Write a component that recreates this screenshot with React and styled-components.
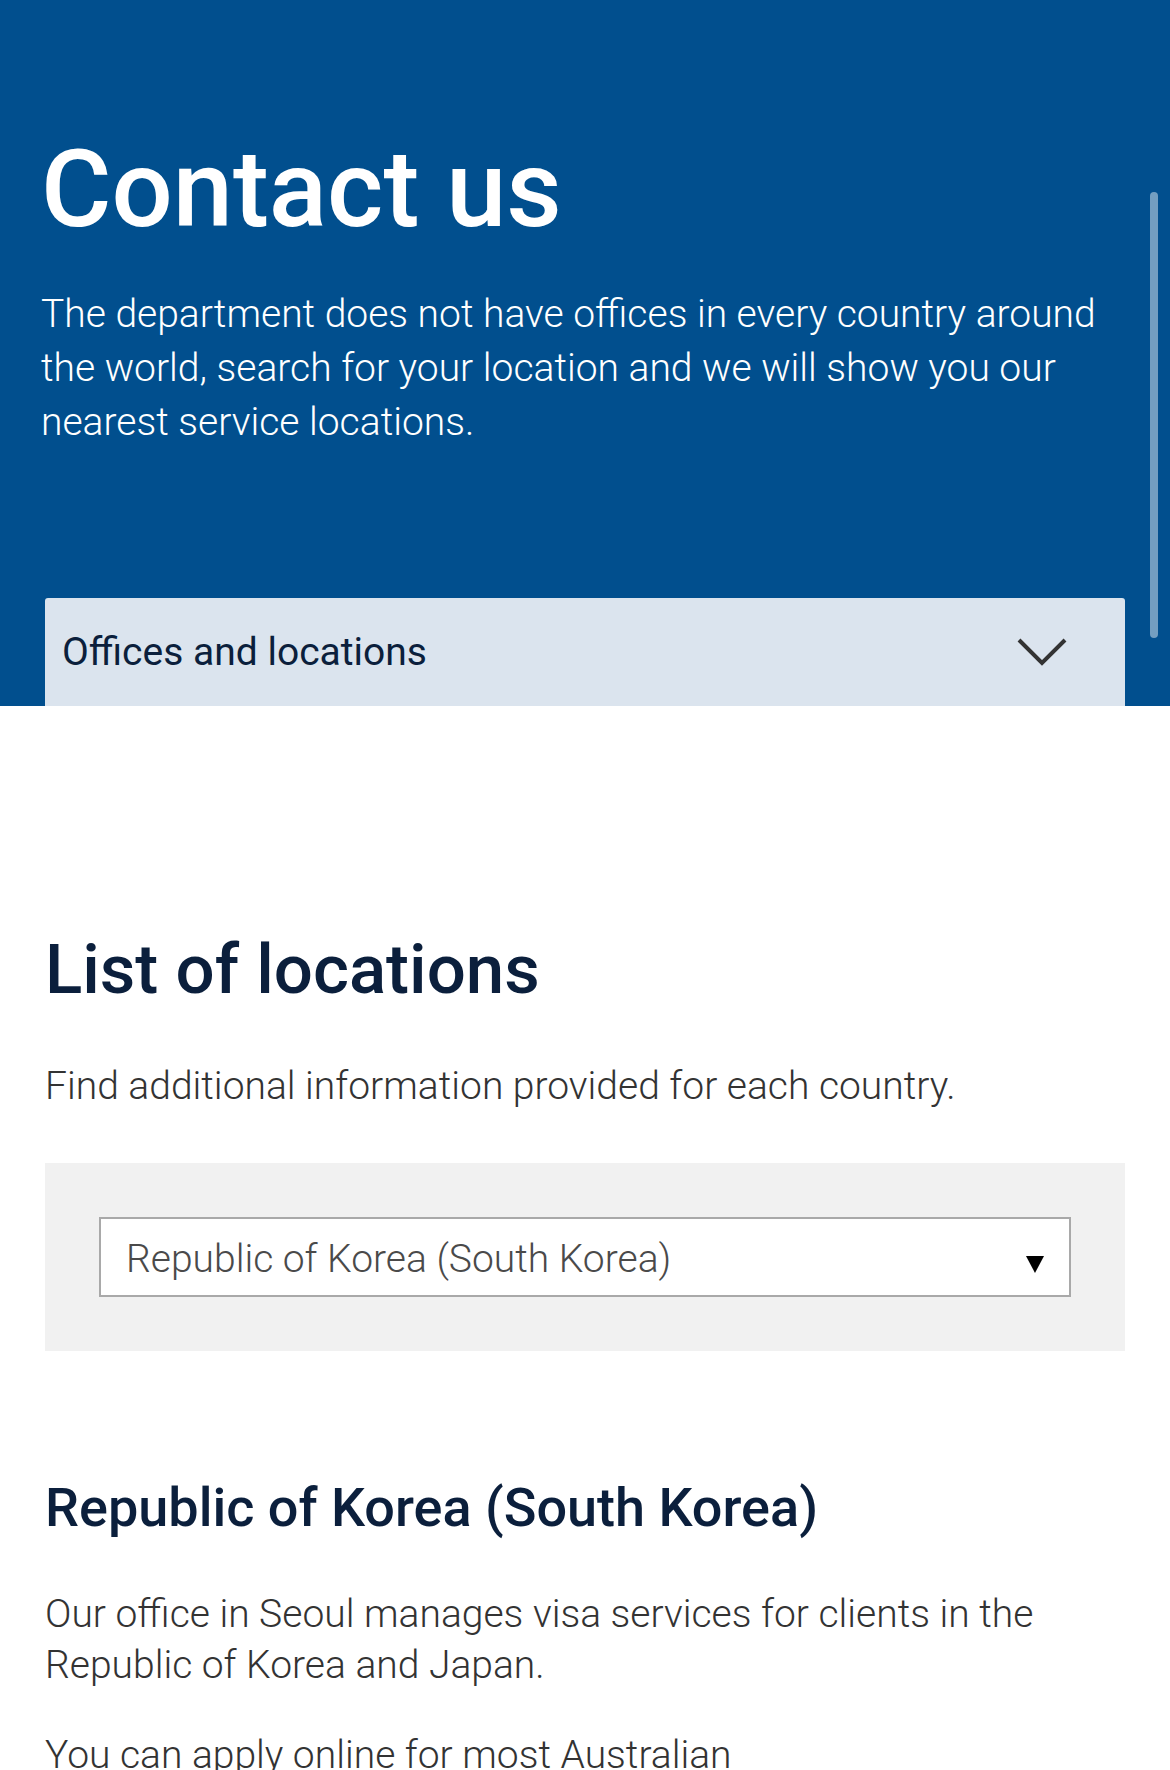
import React from 'react';
import styled, { createGlobalStyle } from 'styled-components';

const GlobalStyle = createGlobalStyle`
  html, body {
    margin: 0;
    padding: 0;
    background: #ffffff;
  }
  body {
    font-family: Roboto, "Noto Sans", "Liberation Sans", sans-serif;
    -webkit-font-smoothing: antialiased;
  }
`;

const Page = styled.div`
  position: relative;
  width: 1170px;
  height: 1770px;
  overflow: hidden;
  background: #ffffff;
`;

const Hero = styled.header`
  background: #014f8e;
  padding: 127px 45px 0 41px;
`;

const Title = styled.h1`
  margin: 0;
  color: #ffffff;
  font-size: 108px;
  font-weight: 500;
  line-height: 124px;
`;

const Lead = styled.p`
  margin: 36px 0 0;
  color: #ffffff;
  font-size: 39px;
  font-weight: 300;
  line-height: 54px;
`;

const Accordion = styled.button`
  display: flex;
  align-items: center;
  justify-content: space-between;
  width: 1080px;
  height: 108px;
  margin: 149px 0 0 4px;
  padding: 0 57px 0 17px;
  border: 0;
  border-radius: 3px 3px 0 0;
  background: #dbe4ee;
  color: #0b1f3c;
  font-family: inherit;
  font-size: 39px;
  font-weight: 400;
  text-align: left;
  cursor: pointer;
`;

const Scrollbar = styled.div`
  position: absolute;
  top: 192px;
  left: 1150px;
  width: 8px;
  height: 446px;
  border-radius: 4px;
  background: rgba(255, 255, 255, 0.45);
`;

const Content = styled.main`
  padding: 0 45px;
`;

const SectionTitle = styled.h2`
  margin: ${p => p.$top}px 0 0;
  color: #0b1f3c;
  font-size: ${p => p.$size}px;
  font-weight: 500;
  line-height: 1.2;
`;

const Text = styled.p`
  margin: ${p => p.$top}px 0 0;
  color: #333333;
  font-size: 39px;
  font-weight: 300;
  line-height: ${p => p.$lh}px;
`;

const NoWrap = styled.span`
  white-space: nowrap;
`;

const Filter = styled.div`
  margin-top: 50px;
  padding: 54px;
  background: #f1f1f1;
`;

const Select = styled.div`
  display: flex;
  align-items: center;
  justify-content: space-between;
  height: 80px;
  box-sizing: border-box;
  padding: 5px 25px 0 25px;
  border: 2px solid #a9a9a9;
  background: #ffffff;
  color: #4a4a4a;
  font-size: 39px;
  font-weight: 300;

  svg {
    margin-top: 10px;
  }
`;

const Chevron = () => (
  <svg width="52" height="34" viewBox="0 0 52 34" fill="none">
    <path d="M3 5 L26 28 L49 5" stroke="#333" strokeWidth="4" />
  </svg>
);

const Caret = () => (
  <svg width="18" height="17" viewBox="0 0 18 17">
    <polygon points="0,0 18,0 9,17" fill="#000" />
  </svg>
);

export default function App() {
  return (
    <Page>
      <GlobalStyle />
      <Hero>
        <Title>Contact us</Title>
        <Lead>
          The department does not have offices in every country around the world, search for your
          location and we will show you our nearest service locations.
        </Lead>
        <Accordion>
          <span>Offices and locations</span>
          <Chevron />
        </Accordion>
      </Hero>
      <Scrollbar />
      <Content>
        <SectionTitle $top={223} $size={69}>List of locations</SectionTitle>
        <Text $top={47} $lh={54}>Find additional information provided for each country.</Text>
        <Filter>
          <Select>
            <span>Republic of Korea (South Korea)</span>
            <Caret />
          </Select>
        </Filter>
        <SectionTitle $top={125} $size={54}>Republic of Korea (South Korea)</SectionTitle>
        <Text $top={48} $lh={51}>
          Our office in Seoul manages visa services for clients in the Republic of Korea and Japan.
        </Text>
        <Text $top={39} $lh={51}>
          You can apply online for most Australian <NoWrap>visa and citizenship applications</NoWrap>.
        </Text>
      </Content>
    </Page>
  );
}
